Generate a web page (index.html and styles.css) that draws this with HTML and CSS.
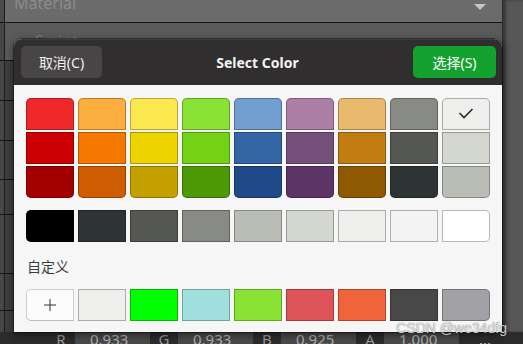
FILE: index.html
```html
<!DOCTYPE html>
<html lang="zh">

<head>
    <meta charset="UTF-8">
    <meta name="viewport" content="width=device-width, initial-scale=1.0">
    <title>Select Color</title>
    <link rel="stylesheet" href="styles.css">
</head>

<body>
    <div class="app">
        <div class="panel">
            <div class="row material">
                <span class="row-label">Material</span>
                <span class="caret"></span>
            </div>
            <div class="row script"><span class="row-label">Script</span></div>
            <div class="row h39"></div>
            <div class="row h39"></div>
            <div class="row h38"></div>
            <div class="row h34"></div>
            <div class="row h58"></div>
            <div class="row h36"></div>
            <div class="row last"></div>
        </div>
        <div class="side"></div>
    </div>

    <div class="rgba-bar">
        <span class="bar-label">R</span><span class="field">0.933</span>
        <span class="bar-label">G</span><span class="field">0.933</span>
        <span class="bar-label">B</span><span class="field">0.925</span>
        <span class="bar-label">A</span><span class="field">1.000</span>
        <span class="more">...</span>
    </div>

    <div class="dialog">
        <div class="dialog-header">
            <button class="btn btn-cancel">取消(C)</button>
            <div class="dialog-title">Select Color</div>
            <button class="btn btn-select">选择(S)</button>
        </div>

        <div class="dialog-body">
            <div class="palette">
                <div class="col">
                    <div class="sw" style="background:#ef2929"></div>
                    <div class="sw" style="background:#cc0000"></div>
                    <div class="sw" style="background:#a40000"></div>
                </div>
                <div class="col">
                    <div class="sw" style="background:#fcaf3e"></div>
                    <div class="sw" style="background:#f57900"></div>
                    <div class="sw" style="background:#ce5c00"></div>
                </div>
                <div class="col">
                    <div class="sw" style="background:#fce94f"></div>
                    <div class="sw" style="background:#edd400"></div>
                    <div class="sw" style="background:#c4a000"></div>
                </div>
                <div class="col">
                    <div class="sw" style="background:#8ae234"></div>
                    <div class="sw" style="background:#73d216"></div>
                    <div class="sw" style="background:#4e9a06"></div>
                </div>
                <div class="col">
                    <div class="sw" style="background:#729fcf"></div>
                    <div class="sw" style="background:#3465a4"></div>
                    <div class="sw" style="background:#204a87"></div>
                </div>
                <div class="col">
                    <div class="sw" style="background:#ad7fa8"></div>
                    <div class="sw" style="background:#75507b"></div>
                    <div class="sw" style="background:#5c3566"></div>
                </div>
                <div class="col">
                    <div class="sw" style="background:#e9b96e"></div>
                    <div class="sw" style="background:#c17d11"></div>
                    <div class="sw" style="background:#8f5902"></div>
                </div>
                <div class="col">
                    <div class="sw" style="background:#888a85"></div>
                    <div class="sw" style="background:#555753"></div>
                    <div class="sw" style="background:#2e3436"></div>
                </div>
                <div class="col">
                    <div class="sw selected" style="background:#eeeeec">
                        <svg width="48" height="32" viewBox="0 0 48 32">
                            <path d="M17.5 15 L22 19.5 L30.5 11" fill="none" stroke="#2a2a2a" stroke-width="1.6" />
                        </svg>
                    </div>
                    <div class="sw" style="background:#d3d7cf"></div>
                    <div class="sw" style="background:#babdb6"></div>
                </div>
            </div>

            <div class="sw-row">
                <div class="sw" style="background:#000000"></div>
                <div class="sw" style="background:#2e3436"></div>
                <div class="sw" style="background:#555753"></div>
                <div class="sw" style="background:#888a85"></div>
                <div class="sw" style="background:#babdb6"></div>
                <div class="sw" style="background:#d3d7cf"></div>
                <div class="sw" style="background:#eeeeec"></div>
                <div class="sw" style="background:#f3f3f3"></div>
                <div class="sw" style="background:#ffffff"></div>
            </div>

            <div class="custom-label">自定义</div>

            <div class="sw-row custom">
                <div class="sw add">
                    <svg width="48" height="32" viewBox="0 0 48 32">
                        <path d="M24 10 V22 M18 16 H30" fill="none" stroke="#333" stroke-width="1" />
                    </svg>
                </div>
                <div class="sw" style="background:#eeeeec"></div>
                <div class="sw" style="background:#00ff00"></div>
                <div class="sw" style="background:#a0e1e0"></div>
                <div class="sw" style="background:#8ae234"></div>
                <div class="sw" style="background:#de5458"></div>
                <div class="sw" style="background:#ef643a"></div>
                <div class="sw" style="background:#484848"></div>
                <div class="sw" style="background:#a2a1a6"></div>
            </div>
        </div>
    </div>

    <div class="watermark">CSDN @we34dfg</div>
</body>

</html>
```

FILE: styles.css
```css
* {
    box-sizing: border-box;
}

body {
    margin: 0;
    width: 523px;
    height: 344px;
    overflow: hidden;
    position: relative;
    background-color: #2c2c2c;
    font-family: "Noto Sans", "Noto Sans CJK SC", sans-serif;
}

/* Background editor behind the dialog */
.app {
    display: flex;
    height: 332px;
}

.panel {
    width: 502px;
    display: flex;
    flex-direction: column;
}

.row {
    border-bottom: 1px solid #161616;
    background: linear-gradient(to right, #464646 4px, #1c1c1c 4px 5px, #3e3e3e 5px);
}

.row-label {
    display: block;
    font-size: 16px;
    line-height: 16px;
    color: #8c8c8c;
}

.material {
    height: 23px;
    display: flex;
    justify-content: space-between;
    padding: 0 16px 0 14px;
    background: linear-gradient(to right, #4a4a4a 4px, #1c1c1c 4px 5px, #6b6b6b 5px);
}

.material .row-label {
    margin-top: -5px;
}

.caret {
    margin-top: 4px;
    width: 0;
    height: 0;
    border-left: 6px solid transparent;
    border-right: 6px solid transparent;
    border-top: 6px solid #c4c4c4;
}

.script {
    height: 38px;
    padding: 10px 0 0 35px;
    background: linear-gradient(to right, #464646 4px, #1c1c1c 4px 5px, #5a5a5a 5px);
}

.script .row-label {
    color: #787878;
}

.h39 { height: 40px; }
.h38 { height: 39px; }
.h34 { height: 35px; }
.h58 { height: 59px; }
.h36 { height: 37px; }
.last { flex: 1; border-bottom: none; }

.side {
    flex: 1;
    background-color: #575757;
    border-left: 1px solid #2a2a2a;
    box-shadow: inset 3px 0 3px rgba(0, 0, 0, 0.35);
}

/* RGBA fields at the bottom */
.rgba-bar {
    display: flex;
    height: 12px;
    padding-left: 47px;
    font-size: 15px;
    line-height: 15px;
    color: #b4b4b4;
    overflow: hidden;
}

.bar-label {
    width: 28px;
    text-align: center;
    color: #9c9c9c;
}

.field {
    width: 75px;
    height: 12px;
    padding-left: 15px;
    background-color: #4a4a4a;
}

.more {
    margin-left: 20px;
    color: #c8c8c8;
}

/* Color chooser dialog */
.dialog {
    position: absolute;
    left: 14px;
    top: 39px;
    width: 488px;
    height: 293px;
    background-color: #f6f6f6;
    border-radius: 8px 8px 0 0;
    box-shadow: 0 0 0 1px rgba(0, 0, 0, 0.4), 0 3px 10px rgba(0, 0, 0, 0.5);
    overflow: hidden;
}

.dialog-header {
    height: 46px;
    display: flex;
    align-items: center;
    padding: 0 6px 0 7px;
    background-color: #302e2e;
    box-shadow: inset 0 1px rgba(255, 255, 255, 0.06);
}

.btn {
    height: 32px;
    border: none;
    border-radius: 5px;
    padding: 0;
    font-family: "Noto Sans", "Noto Sans CJK SC", sans-serif;
    font-size: 14px;
    color: #eeeeee;
}

.btn-cancel {
    width: 81px;
    background-color: #474545;
}

.btn-select {
    width: 83px;
    background-color: #14a22e;
    color: #ffffff;
}

.dialog-title {
    flex: 1;
    text-align: center;
    font-size: 14px;
    font-weight: bold;
    color: #f2f2f2;
}

.dialog-body {
    padding: 13px 12px 0 12px;
}

.palette {
    display: flex;
    gap: 4px;
}

.col {
    display: flex;
    flex-direction: column;
    gap: 2px;
}

.sw {
    width: 48px;
    height: 32px;
    box-shadow: inset 0 0 0 1px rgba(0, 0, 0, 0.28);
}

.sw svg {
    display: block;
}

.col .sw:first-child {
    border-radius: 5px 5px 0 0;
}

.col .sw:last-child {
    border-radius: 0 0 5px 5px;
}

.sw-row {
    display: flex;
    gap: 4px;
    margin-top: 12px;
}

.sw-row .sw:first-child {
    border-radius: 5px 0 0 5px;
}

.sw-row .sw:last-child {
    border-radius: 0 5px 5px 0;
}

.custom {
    margin-top: 0;
}

.sw.add {
    background-color: #fcfcfc;
    box-shadow: inset 0 0 0 1px rgba(0, 0, 0, 0.18), inset 0 -1px rgba(0, 0, 0, 0.08);
}

.custom-label {
    margin: 15px 0 12px 1px;
    font-size: 14px;
    line-height: 20px;
    color: #3c3c3c;
}

.watermark {
    position: absolute;
    right: 16px;
    top: 320px;
    font-family: "Liberation Sans", Arial, sans-serif;
    font-size: 14px;
    color: rgba(255, 255, 255, 0.8);
    text-shadow: 0 0 1px rgba(0, 0, 0, 0.7);
}
```
